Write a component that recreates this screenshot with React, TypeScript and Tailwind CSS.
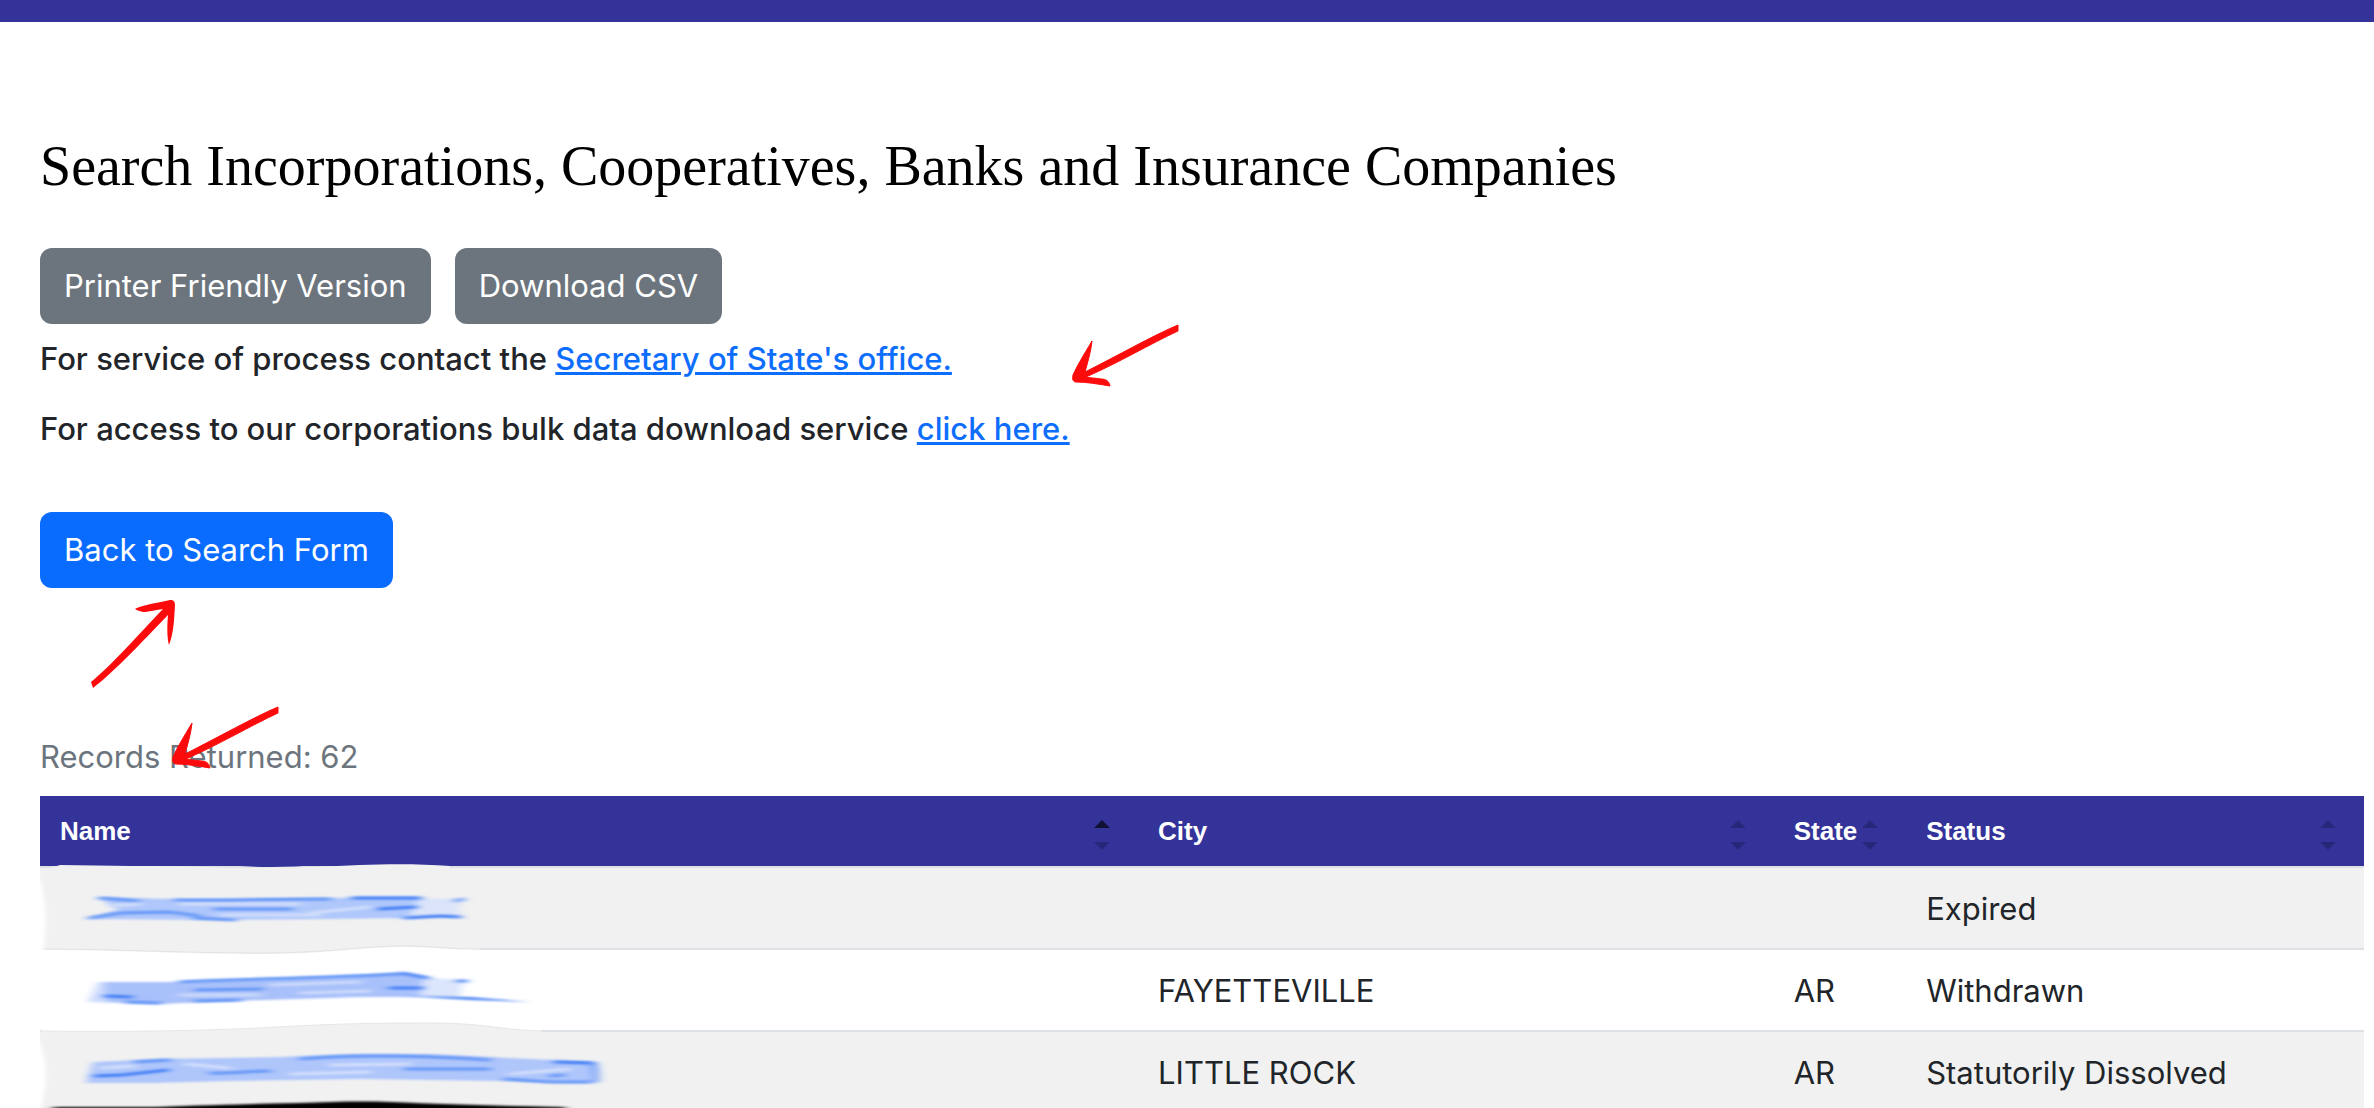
import clsx from "clsx";

type SortState = "asc" | "none";

type Column = {
  label: string;
  width: string;
  sort: SortState;
};

type Company = {
  id: number;
  city: string;
  state: string;
  status: string;
};

const COLUMNS: Column[] = [
  { label: "Name", width: "w-[47.25%]", sort: "asc" },
  { label: "City", width: "w-[27.35%]", sort: "none" },
  { label: "State", width: "w-[5.7%]", sort: "none" },
  { label: "Status", width: "w-[19.7%]", sort: "none" },
];

const COMPANIES: Company[] = [
  { id: 1, city: "", state: "", status: "Expired" },
  { id: 2, city: "FAYETTEVILLE", state: "AR", status: "Withdrawn" },
  { id: 3, city: "LITTLE ROCK", state: "AR", status: "Statutorily Dissolved" },
];

function SortIcon({ sort }: { sort: SortState }) {
  return (
    <svg width="16" height="30" viewBox="0 0 16 30" className="mt-2 shrink-0" aria-hidden="true">
      <path d="M8 0 L16 8 H0 Z" opacity={sort === "asc" ? 0.65 : 0.2} />
      <path d="M8 30 L0 22 H16 Z" opacity={0.2} />
    </svg>
  );
}

// Hand drawn marker arrow pointing down and to the left
function ArrowDownLeft({ className }: { className: string }) {
  return (
    <svg
      width="108"
      height="64"
      viewBox="0 0 108 64"
      className={clsx("absolute pointer-events-none", className)}
      aria-hidden="true"
    >
      <path
        fill="#fb0b0b"
        stroke="#fb0b0b"
        d="M106 1 C82 11 45 32 13 48 C16 37 19 27 20 17 C11 32 5 42 1 51 C0 55 1 58 4 58 C14 58 26 60 38 62 C37 57 34 55 29 55 C23 54 18 54 14 53 C48 38 78 20 106 7 Z"
      />
    </svg>
  );
}

function ArrowUpRight({ className }: { className: string }) {
  return (
    <svg
      width="86"
      height="90"
      viewBox="0 0 86 90"
      className={clsx("absolute pointer-events-none", className)}
      aria-hidden="true"
    >
      <path
        fill="#fb0b0b"
        d="M1 82 C22 65 47 36 73 9 C64 10 59 12 53 12 C49 11 46 10 45 9 C49 6 61 4 80 0 C84 0 85 2 85 5 C84 20 84 32 79 45 C77 38 77 26 78 15 C51 43 24 72 3 88 Z"
      />
    </svg>
  );
}

// Smudged brush strokes that hide the company names
function Redactions() {
  return (
    <svg
      width="620"
      height="256"
      viewBox="0 0 620 256"
      className="absolute -left-[10px] top-[60px] pointer-events-none"
      role="img"
      aria-label="Names redacted"
    >
      <defs>
        <filter id="soft" x="-5%" y="-30%" width="110%" height="160%">
          <feGaussianBlur stdDeviation="4 1" />
        </filter>
        <filter id="streak" x="-5%" y="-30%" width="110%" height="160%">
          <feGaussianBlur stdDeviation="5 1" />
        </filter>
        <filter id="smear" x="-50%" y="-30%" width="200%" height="160%">
          <feGaussianBlur stdDeviation="2" />
        </filter>
      </defs>

      {/* Dragged row edges */}
      <path fill="#f1f1f1" d="M14 14 L30 9 L100 10 C150 10 175 11 200 12 L285 11 C340 8 380 7 420 10 L420 14 Z" />
      <path fill="#333399" d="M195 9 Q240 13 290 9 Z" />
      <rect x="14" y="88" width="436" height="11" fill="#f1f1f1" />
      <path
        fill="none"
        stroke="#e2e4e4"
        d="M10 93 C90 93 150 97 230 97 C300 97 330 90 375 90 C400 90 420 93 450 93"
      />
      <path
        fill="#ffffff"
        d="M8 94 C90 94 150 98 230 98 C300 98 330 91 375 91 C400 91 420 94 452 94 V102 H8 Z"
      />
      <rect x="12" y="164" width="498" height="13" fill="#ffffff" />
      <path
        fill="#f1f1f1"
        d="M10 175 C90 176 160 175 230 172 C300 168 330 167 400 167 C455 167 470 174 512 175 V182 H10 Z"
      />
      <path
        fill="none"
        stroke="#e5e7e7"
        d="M10 175 C90 176 160 175 230 172 C300 168 330 167 400 167 C455 167 470 174 512 175"
      />
      <path filter="url(#smear)" fill="#ffffff" d="M-4 18 L9 22 C17 40 17 70 13 98 L-4 98 Z" />
      <path filter="url(#smear)" fill="#ffffff" d="M-4 180 L9 184 C18 205 18 228 10 256 L-4 256 Z" />

      {/* First name */}
      <g filter="url(#soft)">
        <path fill="#dbe4f9" d="M380 42 L434 43 L428 52 L430 61 L380 61 Z" />
        <path fill="#afc7fb" d="M68 41 L140 43 L300 42 L390 41 L378 62 L300 63 L180 64 L55 63 L88 54 Z" />
      </g>
      <g filter="url(#streak)" fill="none" strokeLinecap="round">
        <g stroke="#d3dffb" strokeWidth="3">
          <path d="M80 50 L110 48" />
          <path d="M150 48 L270 48" />
          <path d="M280 57 L340 51" />
          <path d="M190 59 L290 59" />
        </g>
        <g stroke="#6496f6" strokeWidth="3">
          <path d="M70 42 L108 45" />
          <path d="M145 44 C190 45 240 43 300 43" />
          <path d="M60 62 L90 57 L140 56 L170 60" />
          <path d="M185 53 L262 53" />
          <path d="M165 62 L205 64" />
          <path d="M425 45 L433 43" />
        </g>
        <g stroke="#3f7df5" strokeWidth="3">
          <path d="M322 42 L390 42" />
          <path d="M348 53 L386 51" />
          <path d="M375 62 L410 60 L430 61" />
        </g>
      </g>

      {/* Second name */}
      <g filter="url(#soft)">
        <path fill="#dbe5fb" d="M385 121 L434 124 L429 142 L385 141 Z" />
        <path fill="#cfdcfc" d="M58 146 L68 126 L90 126 L90 147 Z" />
        <path
          fill="#a9c1fa"
          d="M74 126 L140 126 L200 124 L300 121 L370 117 L394 121 L390 141 L330 141 L200 145 L130 148 L76 146 Z"
        />
      </g>
      <g filter="url(#streak)" fill="none" strokeLinecap="round">
        <g stroke="#cddafb" strokeWidth="3">
          <path d="M150 139 L230 139" />
          <path d="M240 129 L330 126" />
          <path d="M270 137 L340 135" />
        </g>
        <g stroke="#6496f6" strokeWidth="3">
          <path d="M150 126 C220 123 290 122 370 118" />
          <path d="M165 134 L232 133" />
          <path d="M165 145 L210 144" />
          <path d="M96 146 L130 147" />
        </g>
        <g stroke="#3f7df5" strokeWidth="3">
          <path d="M75 140 L102 141" />
          <path d="M372 117 L398 122" />
          <path d="M360 132 L392 132" />
          <path d="M428 125 L436 125" />
        </g>
        <path fill="#4b85f5" d="M375 140 L440 141 L500 146 L440 144 Z" />
      </g>

      {/* Third name */}
      <g filter="url(#soft)">
        <path
          fill="#afc6fb"
          d="M63 206 L130 203 L250 201 L320 198 L400 198 L480 202 L568 206 L567 227 L470 225 L330 223 L200 225 L120 227 L56 227 Z"
        />
      </g>
      <g filter="url(#streak)" fill="none" strokeLinecap="round">
        <g stroke="#d3dffb" strokeWidth="3">
          <path d="M70 212 L105 210" />
          <path d="M155 208 L200 212" />
          <path d="M300 209 L380 208" />
          <path d="M480 218 L540 213" />
          <path d="M260 218 L340 216" />
        </g>
        <g stroke="#6496f6" strokeWidth="3">
          <path d="M105 206 L140 204" />
          <path d="M180 217 C200 218 220 215 240 215" />
          <path d="M270 203 C330 198 400 200 460 204" />
          <path d="M375 213 L460 213" />
          <path d="M475 223 L520 226 L560 226" />
          <path d="M520 220 L534 219" />
        </g>
        <g stroke="#3f7df5" strokeWidth="3">
          <path d="M65 220 L92 219 L138 214" />
          <path d="M525 206 L562 207 Q567 214 566 225" />
        </g>
      </g>

      {/* Dark smear along the fourth row */}
      <path
        filter="url(#soft)"
        d="M23 251 L127 251 C170 249 220 248 270 247 C300 246 330 245 360 246 C410 248 470 250 535 251 V262 H23 Z"
      />
    </svg>
  );
}

export default function App() {
  return (
    <div className="h-screen overflow-hidden bg-white font-['Inter',sans-serif] text-[31px] leading-[48px] text-[#212529]">
      <header className="h-[22px] bg-[#333399]" />

      <main className="pt-[110px] pl-10 pr-[10px]">
        <h1 className="font-['Liberation_Serif',serif] text-[56px] leading-[68px] text-black">
          Search Incorporations, Cooperatives, Banks and Insurance Companies
        </h1>

        <div className="mt-12 flex gap-6">
          <button className="h-[76px] rounded-xl bg-[#6c757d] px-6 text-white">
            Printer Friendly Version
          </button>
          <button className="h-[76px] rounded-xl bg-[#6c757d] px-6 text-white">
            Download CSV
          </button>
        </div>

        {/* Contact links */}
        <div className="relative mt-[11px] space-y-[22px] font-medium">
          <p>
            For service of process contact the{" "}
            <a href="#" className="text-[#0d6efd] underline">
              Secretary of State's office.
            </a>
          </p>
          <p>
            For access to our corporations bulk data download service{" "}
            <a href="#" className="text-[#0d6efd] underline">
              click here.
            </a>
          </p>
          <ArrowDownLeft className="left-[1032px] -top-[11px]" />
        </div>

        <div className="relative mt-[59px]">
          <button className="h-[76px] rounded-xl bg-[#0a6cff] px-6 text-white">
            Back to Search Form
          </button>
          <ArrowUpRight className="left-[50px] top-[88px]" />
        </div>

        <div className="relative mt-[145px] text-[#6c757d]">
          <p>Records Returned: 62</p>
          <ArrowDownLeft className="left-[132px] -top-[27px]" />
        </div>

        {/* Results */}
        <div className="relative mt-[15px]">
          <table className="w-full table-fixed border-collapse text-left">
            <thead>
              <tr className="h-[71px] border-b-2 border-[#dee2e6] bg-[#333399] text-white">
                {COLUMNS.map((column) => (
                  <th key={column.label} className={clsx("pl-5 pr-7 py-0", column.width)}>
                    <div className="flex items-center justify-between font-['Liberation_Sans',sans-serif] text-[26px] leading-[40px]">
                      {column.label}
                      <SortIcon sort={column.sort} />
                    </div>
                  </th>
                ))}
              </tr>
            </thead>
            <tbody>
              {COMPANIES.map((company) => (
                <tr
                  key={company.id}
                  className="h-[82px] border-b-2 border-[#dee2e6] odd:bg-[#f1f1f1]"
                >
                  <td className="px-5 pt-0.5" />
                  <td className="px-5 pt-0.5">{company.city}</td>
                  <td className="px-5 pt-0.5">{company.state}</td>
                  <td className="px-5 pt-0.5">{company.status}</td>
                </tr>
              ))}
            </tbody>
          </table>
          <Redactions />
        </div>
      </main>
    </div>
  );
}
